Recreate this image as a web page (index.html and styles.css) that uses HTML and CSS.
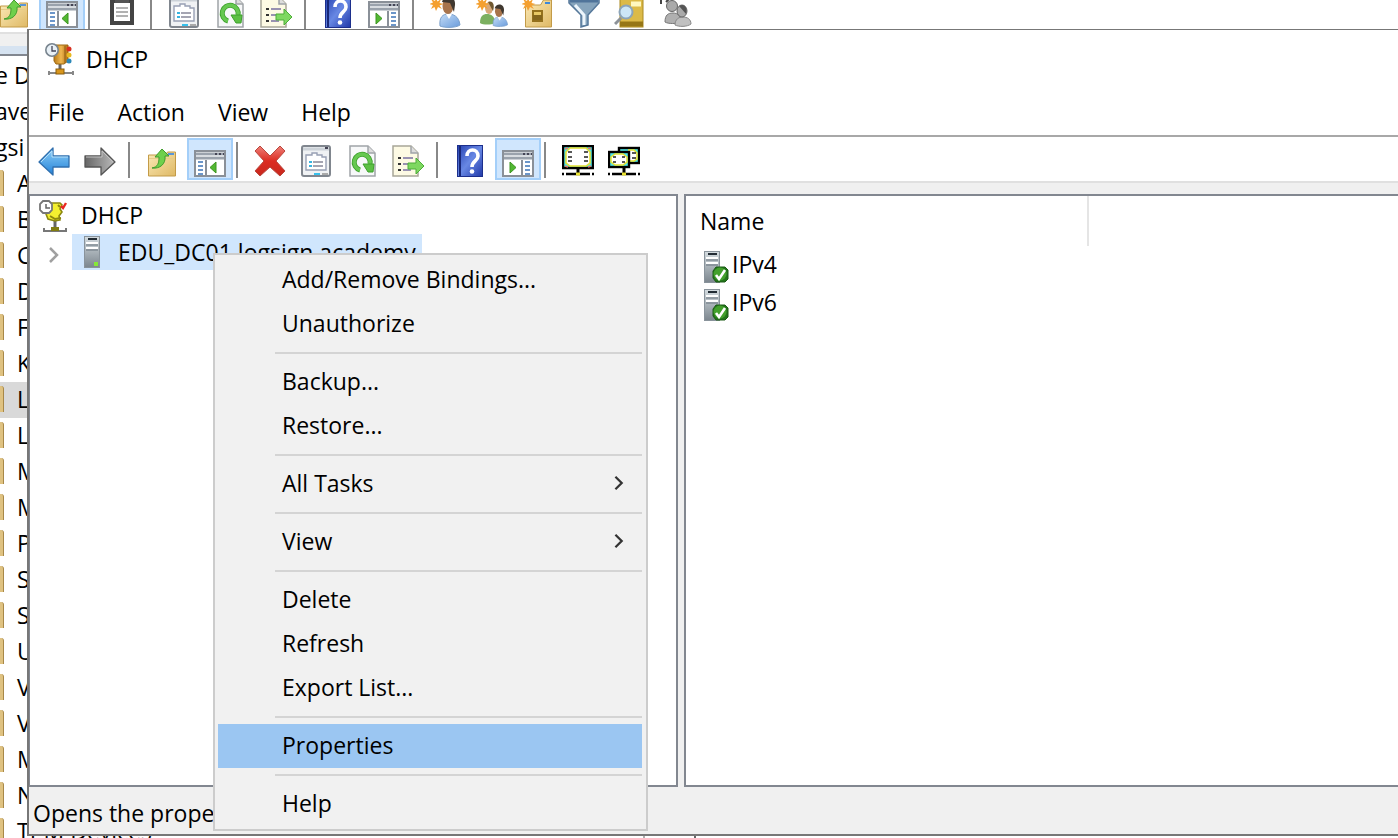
FILE: index.html
```html
<!DOCTYPE html>
<html lang="en">
<head>
    <meta charset="UTF-8">
    <meta name="viewport" content="width=device-width, initial-scale=1.0">
    <title>DHCP</title>
    <link rel="stylesheet" href="styles.css">
</head>
<body>

    <svg class="sprite" aria-hidden="true">
        <defs>
            <linearGradient id="g-blue" x1="0" y1="0" x2="0" y2="1"><stop offset="0" stop-color="#8fd0f8"/><stop offset="1" stop-color="#2382d8"/></linearGradient>
            <linearGradient id="g-grey" x1="0" y1="0" x2="1" y2="0"><stop offset="0" stop-color="#666"/><stop offset="1" stop-color="#bbb"/></linearGradient>
            <linearGradient id="g-sand" x1="0" y1="0" x2="1" y2="1"><stop offset="0" stop-color="#fbeab8"/><stop offset="1" stop-color="#dfb965"/></linearGradient>
            <linearGradient id="g-gold" x1="0" y1="0" x2="1" y2="0"><stop offset="0" stop-color="#b87816"/><stop offset=".5" stop-color="#f0b850"/><stop offset="1" stop-color="#b06c10"/></linearGradient>
            <linearGradient id="g-red" x1="0" y1="0" x2="0" y2="1"><stop offset="0" stop-color="#ee8078"/><stop offset=".5" stop-color="#dc2c22"/><stop offset="1" stop-color="#c8281e"/></linearGradient>
            <linearGradient id="g-help" x1="0" y1="0" x2="1" y2="1"><stop offset="0" stop-color="#2440b0"/><stop offset=".5" stop-color="#6888e4"/><stop offset="1" stop-color="#2038a8"/></linearGradient>
            <linearGradient id="g-steel" x1="0" y1="0" x2="0" y2="1"><stop offset="0" stop-color="#d4dce0"/><stop offset="1" stop-color="#7c868e"/></linearGradient>
            <linearGradient id="g-shirt" x1="0" y1="0" x2="1" y2="1"><stop offset="0" stop-color="#c4dcf6"/><stop offset="1" stop-color="#6a9cdc"/></linearGradient>
        </defs>
        <symbol id="dhcp" viewBox="0 0 32 32">
            <path d="M16 20v8" stroke="#666" stroke-width="3"/>
            <path d="M5 30h24M5 28v4M29 28v4" stroke="#888" stroke-width="2"/>
            <rect x="12" y="26" width="8" height="5" fill="#d8961c" stroke="#8a5c0c"/>
            <path d="M10 4l2-2h12v16l-4 3h-8l-2-3z" fill="url(#g-gold)" stroke="#9c6812"/>
            <path d="M21 3v17" stroke="#8c5a10"/>
            <circle cx="25" cy="6" r="2.5" fill="#d83020"/><circle cx="25" cy="12" r="2.5" fill="#e8b820"/><circle cx="25" cy="18" r="2.5" fill="#2c88b8"/>
            <circle cx="8" cy="7" r="6.2" fill="#e8f0f6" stroke="#78848e" stroke-width="1.6"/>
            <path d="M8 3v5h4" fill="none" stroke="#445" stroke-width="1.3"/>
        </symbol>
        <symbol id="dhcp-tree" viewBox="0 0 32 32">
            <path d="M17 20v8" stroke="#666" stroke-width="3"/>
            <path d="M5 31h24M6 28v3M28 28v3" stroke="#777" stroke-width="2"/>
            <rect x="13" y="27" width="8" height="4" fill="#807c10"/>
            <path d="M13 3h9l2 2-2 4 2 3-3 4 1 4-5 1-7-2-2-5 4-2z" fill="#f4f030" stroke="#8c8810" stroke-width="1.6"/>
            <path d="M12 16l5 3 6-1M20 5l2 2" fill="none" stroke="#8c8810" stroke-width="2"/>
            <path d="M23 6l2 2 3-5" fill="none" stroke="#e82820" stroke-width="2.4"/>
            <path d="M5 1h6l3 3v6l-3 3h-6l-3-3v-6z" fill="#fff" stroke="#777" stroke-width="1.8"/>
            <path d="M8 4v4h4" fill="none" stroke="#666" stroke-width="1.5"/>
        </symbol>
        <symbol id="back" viewBox="0 0 32 32">
            <path d="M1 17L15 3v8h16v11H15v8z" fill="url(#g-blue)" stroke="#2f6fae" stroke-width="1.3" stroke-linejoin="round"/>
            <path d="M3 17L14 6v6h16" fill="none" stroke="#b6e0fa"/>
        </symbol>
        <symbol id="forward" viewBox="0 0 32 32">
            <path d="M31 17L17 3v8H1v11h16v8z" fill="url(#g-grey)" stroke="#555" stroke-width="1.3" stroke-linejoin="round"/>
            <path d="M2 12h16V6l11 11" fill="none" stroke="#c4c4c4"/>
        </symbol>
        <symbol id="up" viewBox="0 0 32 32">
            <path d="M2.5 10h17l2-3h8v24h-27z" fill="url(#g-sand)" stroke="#c39b48"/>
            <path d="M22 9h6" stroke="#5a96d8" stroke-width="2"/>
            <path d="M3 13.5h26" stroke="#e6cc88"/>
            <path d="M6 23c6-1 7-5 7-11H9l7-8 7 7h-4c1 8-5 13-13 12z" fill="#6fd04c" stroke="#3f9c2c"/>
        </symbol>
        <symbol id="pane-left" viewBox="0 0 32 32">
            <rect x="1" y="6" width="30" height="25" fill="#fff" stroke="#8a9098" stroke-width="2"/>
            <path d="M2 9h28M2 13h28" stroke="#9aa2ac" stroke-width="3"/>
            <path d="M2 11h28" stroke="#e4e8ec"/>
            <path d="M21 9h2M25 9h2M29 9h1" stroke="#445" stroke-width="2"/>
            <path d="M12 15v16" stroke="#8a9098" stroke-width="2"/>
            <path d="M4 17h5M4 21h5M4 25h5M4 29h5" stroke="#3c74b8" stroke-width="1.6"/>
            <path d="M22 17v11l-6-5.5z" fill="#52b832" stroke="#3c9420"/>
        </symbol>
        <symbol id="pane-right" viewBox="0 0 32 32">
            <rect x="1" y="6" width="30" height="25" fill="#fff" stroke="#8a9098" stroke-width="2"/>
            <path d="M2 9h28M2 13h28" stroke="#9aa2ac" stroke-width="3"/>
            <path d="M2 11h28" stroke="#e4e8ec"/>
            <path d="M21 9h2M25 9h2M29 9h1" stroke="#445" stroke-width="2"/>
            <path d="M20 15v16" stroke="#8a9098" stroke-width="2"/>
            <path d="M23 17h5M23 21h5M23 25h5M23 29h5" stroke="#3c74b8" stroke-width="1.6"/>
            <path d="M8 17v11l6-5.5z" fill="#52b832" stroke="#3c9420"/>
        </symbol>
        <symbol id="delete" viewBox="0 0 32 32">
            <path d="M6 1l10 10L26 1l5 5-9 10 9 10-5 5-10-9-10 9-5-5 9-10-9-10z" fill="url(#g-red)" stroke="#b8483e" stroke-linejoin="round"/>
        </symbol>
        <symbol id="props" viewBox="0 0 32 32">
            <rect x="2" y="1" width="28" height="30" rx="2" fill="#f0f2f4" stroke="#80868e" stroke-width="2"/>
            <path d="M3 4h26" stroke="#ccd2d8" stroke-width="3"/>
            <path d="M25 3h3" stroke="#445" stroke-width="2"/>
            <path d="M6 10h6V8h5v2h5v2h4v13H6z" fill="#fff" stroke="#98a0b4" stroke-width="1.4"/>
            <path d="M9 17h3M9 21h3" stroke="#38b4e0" stroke-width="2"/>
            <path d="M13 17h10M13 21h10" stroke="#889" stroke-width="1.5"/>
            <path d="M14 29h6" stroke="#38c0ec" stroke-width="2"/><path d="M22 29h6" stroke="#aaa" stroke-width="2"/>
        </symbol>
        <symbol id="refresh" viewBox="0 0 32 32">
            <path d="M4 1h18l7 7v23H4z" fill="#f7f8f9" stroke="#a0a4a8" stroke-width="1.5"/>
            <path d="M22 1v7h7" fill="#ddd" stroke="#a0a4a8" stroke-width="1.5"/>
            <path d="M14 25a8 8 0 1 1 10-6" fill="none" stroke="#3da02c" stroke-width="5"/>
            <path d="M14 25a8 8 0 1 1 10-6" fill="none" stroke="#66c850" stroke-width="3.4"/>
            <path d="M17 19h11l-1 8h-5z" fill="#5cc044" stroke="#3da02c"/>
        </symbol>
        <symbol id="export" viewBox="0 0 32 32">
            <path d="M1 1h18l7 7v23H1z" fill="#fdfae4" stroke="#a8a698" stroke-width="1.5"/>
            <path d="M19 1v7h7" fill="#ddd" stroke="#a0a4a8" stroke-width="1.5"/>
            <path d="M6 13h3M6 19h3M6 25h3" stroke="#333" stroke-width="2"/>
            <path d="M11 13h10M11 19h10M11 25h8" stroke="#7870a0" stroke-width="1.5"/>
            <path d="M16 18h8v-5l8 8-8 8v-5h-8z" fill="#7ed860" stroke="#4cae38"/>
        </symbol>
        <symbol id="help" viewBox="0 0 32 32">
            <rect x="3.5" y=".5" width="25" height="31" fill="url(#g-help)" stroke="#1c2f8c"/>
            <path d="M6 1v30" stroke="#182878" stroke-width="2"/>
            <path d="M13 11c0-8 11-8 11 0 0 5-6 5-6 11" fill="none" stroke="#fff" stroke-width="3.6"/>
            <circle cx="18" cy="26.5" r="2.3" fill="#fff"/>
        </symbol>
        <symbol id="scope" viewBox="0 0 32 32">
            <rect x="1" y="1" width="30" height="22" fill="#50e8e8" stroke="#000" stroke-width="2.5"/>
            <path d="M8 3h16l4 4v11l-4 3H8l-4-3V7z" fill="#fff" stroke="#e8e030" stroke-width="1.5"/>
            <path d="M6 7h4M6 12h4M6 16h4M22 7h4M22 12h4M22 16h4" stroke="#222" stroke-width="1.4"/>
            <path d="M3 4l3-1M29 4l-3-1M3 21l3 1M29 21l-3 1" stroke="#e87868" stroke-width="1.5"/>
            <path d="M16 23v5" stroke="#000" stroke-width="3"/>
            <path d="M0 29h2M4 29h24M30 29h2" stroke="#000" stroke-width="2.4"/>
            <path d="M14 29h4" stroke="#e8e030" stroke-width="3"/>
        </symbol>
        <symbol id="scopes" viewBox="0 0 32 32">
            <rect x="11" y="3" width="20" height="15" fill="#50e8e8" stroke="#000" stroke-width="2.4"/>
            <path d="M20 5h6l3 3v6l-3 2h-6" fill="#fff" stroke="#e8e030" stroke-width="1.5"/>
            <path d="M24 8h4M24 13h4" stroke="#222" stroke-width="1.4"/>
            <rect x="1" y="7" width="20" height="15" fill="#50e8e8" stroke="#000" stroke-width="2.4"/>
            <path d="M7 9h8l4 3v5l-4 3H7l-4-3v-5z" fill="#fff" stroke="#e8e030" stroke-width="1.5"/>
            <path d="M5 12h3M5 17h3M14 12h3M14 17h3" stroke="#222" stroke-width="1.4"/>
            <path d="M16 23v5" stroke="#000" stroke-width="3"/>
            <path d="M0 29h2M4 29h24M30 29h2" stroke="#000" stroke-width="2.4"/>
            <path d="M14 29h4" stroke="#e8e030" stroke-width="3"/>
        </symbol>
        <symbol id="clipboard" viewBox="0 0 32 32">
            <rect x="6" y="5" width="20" height="22" fill="#fff" stroke="#444" stroke-width="4"/>
            <path d="M9 2h14v5H9z" fill="#555"/>
            <path d="M10 12h12M10 16h12M10 20h12" stroke="#999" stroke-width="1.5"/>
        </symbol>
        <symbol id="star" viewBox="0 0 32 32">
            <path d="M6 2l1.5 3.500L11 3 9.500 7l4 1-4 1.500L12 13l-4-2-2 4-1.500-4L1 13l2-4-4-1 4-1.500L1 3l4 2z" fill="#f4a030"/>
        </symbol>
        <symbol id="person" viewBox="0 0 32 32">
            <path d="M10 30c-1-9 3-12 8-12s11 2 12 11c-4 3-16 3-20 1z" fill="url(#g-shirt)" stroke="#7aa0cc"/>
            <path d="M16 18l3 5 3-5z" fill="#fff"/>
            <ellipse cx="18" cy="10" rx="5.500" ry="8" fill="#a8744c"/>
            <path d="M12 6c2-8 14-7 13 3l-1 7-4-9z" fill="#403830"/>
        </symbol>
        <symbol id="user" viewBox="0 0 32 32">
            <use href="#person" width="32" height="32"/>
            <use href="#star" width="32" height="32"/>
        </symbol>
        <symbol id="group" viewBox="0 0 32 32">
            <path d="M4 27c0-7 3-9 7-9s8 2 8 9c-4 2-12 2-15 0z" fill="#7cb060"/>
            <ellipse cx="13" cy="12" rx="4" ry="6" fill="#d8a878"/>
            <path d="M12 6c5-2 7 3 5 9z" fill="#705830"/>
            <use href="#person" x="10" y="8" width="23" height="23"/>
            <use href="#star" width="32" height="32"/>
        </symbol>
        <symbol id="new-folder" viewBox="0 0 32 32">
            <path d="M3.500 9h15l3-5h8v27h-26z" fill="url(#g-sand)" stroke="#c39b48"/>
            <path d="M23 7h5" stroke="#3c88d8" stroke-width="2"/>
            <rect x="11" y="15" width="9" height="10" fill="#e8c864" stroke="#94701c" stroke-width="2"/>
            <path d="M11 19h9v5h-9z" fill="#84651c"/>
            <use href="#star" width="32" height="32"/>
        </symbol>
        <symbol id="filter" viewBox="0 0 32 32">
            <path d="M1 3h30v4L20 19v10l-7 2V19L1 7z" fill="#86a4bc" stroke="#56789a" stroke-width="1.5"/>
            <path d="M2 5h28" stroke="#50749a" stroke-width="3"/>
            <path d="M7 9l9 10v10" fill="none" stroke="#eef6fc" stroke-width="3"/>
        </symbol>
        <symbol id="find" viewBox="0 0 32 32">
            <rect x="6" y="0" width="23" height="31" fill="#dcba48" stroke="#ab8a20"/>
            <path d="M6 28h23" stroke="#967616" stroke-width="5"/>
            <path d="M17 8h10" stroke="#fff8c0" stroke-width="5"/>
            <path d="M7 22l-6 6" stroke="#8c9298" stroke-width="3"/>
            <circle cx="12" cy="16" r="6.500" fill="#cce6f6" stroke="#8ca4b8" stroke-width="2"/>
        </symbol>
        <symbol id="members" viewBox="0 0 32 32">
            <path d="M1 8V3h8l-3-3M9 3L6 6" fill="none" stroke="#444" stroke-width="2"/>
            <path d="M5 26c0-7 3-9 8-9s8 3 8 9c-4 2-13 2-16 0z" fill="#b0b0b0" stroke="#777"/>
            <circle cx="12" cy="10" r="5.500" fill="#aaa" stroke="#666"/>
            <path d="M15 29c0-6 4-8 8-8s8 2 8 7c-4 3-12 3-16 1z" fill="#c0c0c0" stroke="#888"/>
            <ellipse cx="22" cy="15" rx="5" ry="6" fill="#aaa" stroke="#666"/>
            <path d="M19 10c5-3 9 1 7 8z" fill="#555"/>
        </symbol>
        <symbol id="server" viewBox="0 0 32 32">
            <rect x="8.500" y=".5" width="15" height="31" fill="url(#g-steel)" stroke="#89939b"/>
            <path d="M12 3h9" stroke="#222c34" stroke-width="2"/>
            <path d="M10 7h12M10 12h12" stroke="#fff" stroke-width="2"/>
            <path d="M10 9h12M10 14h12" stroke="#68747e"/>
            <path d="M18 26h4v4h-4z" fill="#86e838"/>
        </symbol>
        <symbol id="server-ok" viewBox="0 0 32 32">
            <rect x="4.500" y=".5" width="15" height="31" fill="url(#g-steel)" stroke="#89939b"/>
            <path d="M8 3h9" stroke="#222c34" stroke-width="2"/>
            <path d="M6 7h12M6 12h12" stroke="#fff" stroke-width="2"/>
            <path d="M6 9h12M6 14h12" stroke="#68747e"/>
            <path d="M16 16h9l3 3v9l-3 3h-9l-3-4v-7z" fill="#23751a" stroke="#1d5c16"/>
            <circle cx="20" cy="23" r="6.500" fill="#43a02c"/>
            <path d="M16 24l3 4 6-9" fill="none" stroke="#fff" stroke-width="2.600"/>
        </symbol>
        <symbol id="chevron" viewBox="0 0 12 20">
            <path d="M2 3l7 7-7 7" fill="none" stroke="currentColor" stroke-width="2.500"/>
        </symbol>
    </svg>

    <!-- Active Directory console in the background -->
    <div class="console">
        <div class="toolbar console-toolbar">
            <button aria-label="Up"><svg><use href="#up"/></svg></button>
            <button class="on" aria-label="Console tree"><svg><use href="#pane-left"/></svg></button>
            <span class="sep"></span>
            <button aria-label="Paste"><svg><use href="#clipboard"/></svg></button>
            <span class="sep"></span>
            <button aria-label="Properties"><svg><use href="#props"/></svg></button>
            <button aria-label="Refresh"><svg><use href="#refresh"/></svg></button>
            <button aria-label="Export"><svg><use href="#export"/></svg></button>
            <span class="sep"></span>
            <button aria-label="Help"><svg><use href="#help"/></svg></button>
            <button aria-label="Action pane"><svg><use href="#pane-right"/></svg></button>
            <span class="sep"></span>
            <button aria-label="New user"><svg><use href="#user"/></svg></button>
            <button aria-label="New group"><svg><use href="#group"/></svg></button>
            <button aria-label="New unit"><svg><use href="#new-folder"/></svg></button>
            <button aria-label="Filter"><svg><use href="#filter"/></svg></button>
            <button aria-label="Find"><svg><use href="#find"/></svg></button>
            <button aria-label="Members"><svg><use href="#members"/></svg></button>
        </div>
        <div class="console-body">
            <ul class="console-tree">
                <li class="root">e D</li>
                <li class="root">ave</li>
                <li class="root">gsi</li>
                <li>A</li>
                <li>B</li>
                <li>C</li>
                <li>D</li>
                <li>F</li>
                <li>K</li>
                <li class="current">L</li>
                <li>L</li>
                <li>M</li>
                <li>M</li>
                <li>P</li>
                <li>S</li>
                <li>S</li>
                <li>U</li>
                <li>V</li>
                <li>V</li>
                <li>M</li>
                <li>N</li>
                <li>TPM Devices</li>
            </ul>
            <div class="console-col"></div>
        </div>
    </div>

    <div class="window">
        <div class="titlebar">
            <svg><use href="#dhcp"/></svg>
            <span>DHCP</span>
        </div>
        <div class="menubar">
            <button>File</button>
            <button>Action</button>
            <button>View</button>
            <button>Help</button>
        </div>
        <div class="toolbar">
            <button aria-label="Back"><svg><use href="#back"/></svg></button>
            <button aria-label="Forward"><svg><use href="#forward"/></svg></button>
            <span class="sep"></span>
            <button aria-label="Up"><svg><use href="#up"/></svg></button>
            <button class="on" aria-label="Console tree"><svg><use href="#pane-left"/></svg></button>
            <span class="sep"></span>
            <button aria-label="Delete"><svg><use href="#delete"/></svg></button>
            <button aria-label="Properties"><svg><use href="#props"/></svg></button>
            <button aria-label="Refresh"><svg><use href="#refresh"/></svg></button>
            <button aria-label="Export"><svg><use href="#export"/></svg></button>
            <span class="sep"></span>
            <button aria-label="Help"><svg><use href="#help"/></svg></button>
            <button class="on" aria-label="Action pane"><svg><use href="#pane-right"/></svg></button>
            <span class="sep"></span>
            <button aria-label="New scope"><svg><use href="#scope"/></svg></button>
            <button aria-label="New superscope"><svg><use href="#scopes"/></svg></button>
        </div>
        <div class="panes">
            <ul class="tree">
                <li>
                    <svg class="icon"><use href="#dhcp-tree"/></svg>
                    <span>DHCP</span>
                </li>
                <li>
                    <svg class="expand"><use href="#chevron"/></svg>
                    <span class="node"><svg class="icon"><use href="#server"/></svg>EDU_DC01.logsign.academy</span>
                </li>
            </ul>
            <div class="list">
                <table>
                    <thead>
                        <tr><th>Name</th></tr>
                    </thead>
                    <tbody>
                        <tr><td><svg><use href="#server-ok"/></svg>IPv4</td></tr>
                        <tr><td><svg><use href="#server-ok"/></svg>IPv6</td></tr>
                    </tbody>
                </table>
            </div>
        </div>
        <div class="status">Opens the properties</div>
    </div>

    <div class="context-menu">
        <button>Add/Remove Bindings...</button>
        <button>Unauthorize</button>
        <hr>
        <button>Backup...</button>
        <button>Restore...</button>
        <hr>
        <button>All Tasks <svg><use href="#chevron"/></svg></button>
        <hr>
        <button>View <svg><use href="#chevron"/></svg></button>
        <hr>
        <button>Delete</button>
        <button>Refresh</button>
        <button>Export List...</button>
        <hr>
        <button class="active">Properties</button>
        <hr>
        <button>Help</button>
    </div>

</body>
</html>
```
FILE: styles.css
```css
* {
    box-sizing: border-box;
}
body {
    margin: 0;
    height: 100vh;
    overflow: hidden;
    position: relative;
    font-family: "Open Sans", "Noto Sans", sans-serif;
    font-size: 23px;
    line-height: 34px;
    color: #000;
    background-color: #fff;
}
button {
    font: inherit;
    color: inherit;
    margin: 0;
    padding: 0;
    border: none;
    background: none;
}
ul {
    list-style: none;
    margin: 0;
    padding: 0;
}
.sprite {
    position: absolute;
    width: 0;
    height: 0;
}

/* toolbars */
.toolbar {
    display: flex;
    flex-shrink: 0;
    height: 46px;
    padding: 1px 2px;
    border-bottom: 2px solid #e0e0e0;
    background-color: #fff;
}
.toolbar button {
    flex-shrink: 0;
    width: 46px;
    height: 42px;
    padding-top: 4px;
    border: 1px solid transparent;
}
.toolbar svg {
    display: block;
    width: 32px;
    height: 32px;
    margin: 0 auto;
}
.toolbar .on {
    margin: 0 -2px 0 2px;
    background-color: #d0e6fd;
    border: 2px solid #a4cff9;
    padding-top: 3px;
}
.toolbar .sep {
    flex-shrink: 0;
    width: 2px;
    height: 36px;
    margin: 4px 9px 0 5px;
    background-color: #888;
}

/* background console */
.console {
    display: flex;
    flex-direction: column;
    height: 100%;
    overflow: hidden;
}
.console-toolbar {
    height: 34px;
    margin-left: -11px;
    align-items: flex-end;
}
.console-toolbar .sep {
    margin-bottom: 2px;
}
.console-body {
    flex: 1;
    display: flex;
    min-height: 0;
    border-top: 12px solid #f0f0f0;
}
.console-tree {
    width: 645px;
    border-right: 2px solid #b0b0b0;
    box-shadow: inset 0 8px #d6e3f1, inset 0 10px #828790;
    padding-top: 12px;
}
.console-tree li {
    height: 36px;
    display: flex;
    align-items: center;
    gap: 13px;
    padding-bottom: 2px;
    white-space: pre;
}
.console-tree li::before {
    content: "";
    width: 3px;
    height: 26px;
    border-right: 1px solid #a88848;
    border-radius: 0 3px 0 0;
    background-color: #dfc281;
}
.console-tree .root::before {
    display: none;
}
.console-tree .root {
    margin-left: -5px;
}
.console-tree .current {
    background-color: #d9d9d9;
}
.console-col {
    width: 51px;
    border-right: 2px solid #666;
}

/* DHCP window */
.window {
    position: absolute;
    top: 29px;
    left: 27px;
    right: 0;
    bottom: 2px;
    display: flex;
    flex-direction: column;
    border: 2px solid #777;
    border-top-width: 1px;
    border-right: none;
    background-color: #f0f0f0;
}
.titlebar {
    height: 60px;
    flex-shrink: 0;
    display: flex;
    align-items: center;
    gap: 10px;
    padding: 0 0 2px 15px;
    background-color: #fff;
}
.titlebar svg {
    width: 32px;
    height: 32px;
}
.menubar {
    height: 47px;
    flex-shrink: 0;
    display: flex;
    padding-left: 3px;
    border-bottom: 2px solid #a8a8a8;
    background-color: #fff;
}
.menubar button {
    padding: 0 17px 2px 16px;
}
.panes {
    flex: 1;
    min-height: 0;
    display: grid;
    grid-template-columns: 649px 1fr;
    gap: 6px;
    margin-top: 11px;
}
.tree, .list {
    border: 2px solid #828790;
    background-color: #fff;
}
.tree {
    border-left-width: 1px;
    padding-top: 2px;
}
.tree li {
    height: 36px;
    display: flex;
    align-items: center;
    padding-left: 8px;
    gap: 11px;
}
.tree li > span {
    height: 36px;
}
.icon {
    width: 32px;
    height: 32px;
}
.expand {
    width: 12px;
    height: 20px;
    margin: 6px 1px 0 10px;
    color: #a0a0a0;
}
.node {
    display: flex;
    align-items: center;
    gap: 10px;
    padding: 0 6px 1px 4px;
    background-color: #d0e6fd;
}
.list {
    border-right: none;
}
table {
    border-collapse: collapse;
}
th {
    width: 402px;
    height: 50px;
    padding: 0 0 0 14px;
    border-right: 2px solid #e5e5e5;
    font-weight: normal;
    text-align: left;
}
td {
    height: 38px;
    padding: 0 0 0 14px;
}
td svg {
    width: 32px;
    height: 32px;
    vertical-align: middle;
}
.status {
    height: 47px;
    flex-shrink: 0;
    padding: 9px 4px 0;
}

/* context menu */
.context-menu {
    position: absolute;
    top: 253px;
    left: 213px;
    width: 435px;
    padding: 3px 4px 3px 3px;
    border: 2px solid #ccc;
    background-color: #f1f1f1;
}
.context-menu button {
    display: flex;
    align-items: center;
    justify-content: space-between;
    width: 100%;
    height: 44px;
    padding: 0 17px 2px 64px;
}
.context-menu .active {
    background-color: #9bc6f2;
}
.context-menu hr {
    height: 2px;
    margin: 6px 0 6px 57px;
    border: none;
    background-color: #d4d4d4;
}
.context-menu svg {
    width: 12px;
    height: 18px;
    color: #333;
}
```
